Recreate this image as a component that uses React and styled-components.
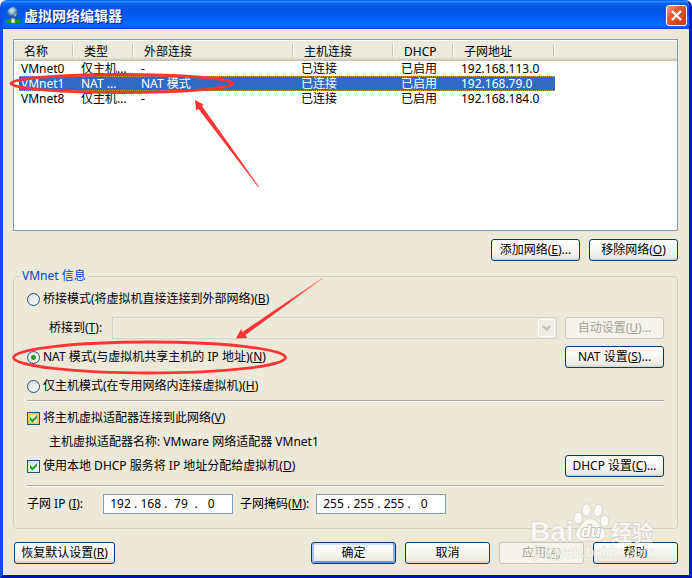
import React, { useState } from "react";
import styled, { createGlobalStyle } from "styled-components";

const GlobalStyle = createGlobalStyle`
  * {
    box-sizing: border-box;
  }

  body {
    margin: 0;
    background: #fff;
  }

  body, button, input, select {
    font-family: "Noto Sans", "Noto Sans CJK SC", sans-serif;
    font-size: 12px;
    line-height: 14px;
    color: #000;
  }
`;

const Window = styled.div`
  position: relative;
  display: flex;
  flex-direction: column;
  min-height: 100vh;
  background: #ece9d8;
  border: 3px solid #0a3fdc;
  border-color: #0a4fe8 #0019cf #0012b8 #0a4fe8;
  border-top: none;
  border-radius: 7px 7px 0 0;
  overflow: hidden;
`;

const TitleBar = styled.header`
  display: flex;
  align-items: center;
  gap: 4px;
  height: 29px;
  margin: 0 -3px;
  padding: 2px 5px 0 6px;
  background: linear-gradient(
    #0058e6 0%,
    #2a8cff 5%,
    #0a62ee 12%,
    #0054e3 30%,
    #0058ee 50%,
    #0268fe 80%,
    #0066fc 90%,
    #0046d2 100%
  );
`;

const Title = styled.h1`
  flex: 1;
  margin: 0;
  font-size: 14px;
  line-height: 20px;
  font-weight: 700;
  color: #fff;
  text-shadow: 1px 1px 1px #0a1883;
`;

const CloseButton = styled.button`
  display: flex;
  align-items: center;
  justify-content: center;
  width: 21px;
  height: 21px;
  padding: 0;
  border: 1px solid #fff;
  border-radius: 3px;
  background: linear-gradient(135deg, #f0a085 0%, #e35b35 35%, #c9340c 100%);
`;

const Content = styled.main`
  flex: 1;
  padding: 10px 11px 11px 10px;
`;

const ListBox = styled.div`
  height: 192px;
  border: 1px solid #7f9db9;
  background: #fff;
  overflow: hidden;
`;

const NetTable = styled.table`
  width: 100%;
  table-layout: fixed;
  border-collapse: separate;
  border-spacing: 0;
`;

const HeadCell = styled.th`
  height: 21px;
  padding: 3px 0 0 10px;
  font-weight: 400;
  text-align: left;
  background: linear-gradient(#fff 0, #fff 1px, #ebeadb 1px, #ebeadb 18px, #d6d2c2 19px, #c5c2b2 21px);

  &:not(:last-child) {
    background:
      linear-gradient(#c7c5b2, #c7c5b2) right 1px top 4px / 1px 13px no-repeat,
      linear-gradient(#fff, #fff) right 0 top 4px / 1px 13px no-repeat,
      linear-gradient(#fff 0, #fff 1px, #ebeadb 1px, #ebeadb 18px, #d6d2c2 19px, #c5c2b2 21px);
  }
`;

const Cell = styled.td`
  height: 15px;
  padding: 0 0 0 7px;
  white-space: nowrap;
  overflow: hidden;

  &:first-child {
    border-left: 5px solid #fff;
    padding-left: 2px;
  }
`;

const NetRow = styled.tr`
  color: ${(props) => (props.$selected ? "#fff" : "#000")};

  ${Cell}:not(:last-child) {
    ${(props) =>
      props.$selected &&
      `
      background:
        repeating-linear-gradient(90deg, #e0963c 0 1px, #316ac5 1px 2px) top / 100% 1px no-repeat,
        repeating-linear-gradient(90deg, #e0963c 0 1px, #316ac5 1px 2px) bottom / 100% 1px no-repeat,
        #316ac5;
    `}
  }
`;

const ListActions = styled.div`
  display: flex;
  justify-content: flex-end;
  gap: 9px;
  margin: 8px 0;
`;

const Button = styled.button`
  flex: none;
  width: ${(props) => props.$width || 85}px;
  height: 22px;
  padding: 0;
  border: 1px solid #003c74;
  border-radius: 3px;
  background: linear-gradient(#fff, #f4f4ef 60%, #ece9df 88%, #d8d0c4);
  white-space: nowrap;
  box-shadow: ${(props) =>
    props.$primary
      ? "inset 2px 0 #a9c3f0, inset -2px 0 #8aaae8, inset 0 2px #cee0fb, inset 0 -2px #6f91e0"
      : "none"};

  &:disabled {
    color: #a1a192;
    border-color: #c9c7ba;
    background: #f5f4ea;
  }
`;

const Group = styled.fieldset`
  min-width: 0;
  margin: 0;
  padding: 0 6px 12px;
  border: 1px solid #d0d0bf;
  border-radius: 4px;
`;

const Legend = styled.legend`
  padding: 0 2px;
  color: #0046d5;
`;

const GroupBody = styled.div`
  padding: 5px 7px 0;
`;

const Choices = styled.div`
  display: grid;
  grid-template-columns: 1fr 99px;
  gap: 7px 8px;
`;

const Adapter = styled.div`
  display: grid;
  row-gap: 2px;
  padding-bottom: 5px;
`;

const Row = styled.div`
  display: flex;
  align-items: center;
  justify-content: ${(props) => (props.$spread ? "space-between" : "flex-start")};
  gap: 8px;
  height: 22px;
  padding-left: ${(props) => (props.$indent ? 22 : 0)}px;
`;

const OptionLabel = styled.label`
  display: flex;
  align-items: center;
  gap: 3px;
  white-space: nowrap;
`;

const Radio = styled.input`
  appearance: none;
  width: 13px;
  height: 13px;
  margin: 0;
  border: 1px solid #21517f;
  border-radius: 50%;
  background: linear-gradient(135deg, #dcdcd7, #fff);

  &:checked {
    background:
      radial-gradient(circle, #21a121 0 2px, transparent 3px),
      linear-gradient(135deg, #dcdcd7, #fff);
  }
`;

const Check = styled.input`
  appearance: none;
  width: 13px;
  height: 13px;
  margin: 0;
  border: 1px solid #1c5180;
  box-shadow: ${(props) => (props.$hot ? "inset 0 0 0 2px #fbc761" : "none")};
  background: linear-gradient(135deg, #dcdcd7, #fff);
`;

const CheckBox = styled.span`
  position: relative;
  display: flex;

  svg {
    position: absolute;
    inset: 0;
    pointer-events: none;
  }
`;

const Combo = styled.div`
  position: relative;
  flex: 1;
  display: flex;

  svg {
    position: absolute;
    top: 2px;
    right: 2px;
    pointer-events: none;
  }
`;

const Select = styled.select`
  appearance: none;
  width: 100%;
  height: 22px;
  border: 1px solid #c9c7ba;
  border-radius: 0;
  background: #ece9d8;
  box-shadow: inset 0 0 0 1px #f5f4ea;
`;

const ComboLabel = styled.label`
  width: 55px;
  white-space: nowrap;
`;

const Divider = styled.hr`
  height: 2px;
  margin: 3px 0 5px;
  border: none;
  border-top: 1px solid #aca899;
  background: #fff;
`;

const SubnetRow = styled.div`
  display: flex;
  align-items: center;
  height: 24px;
`;

const SubnetLabel = styled.label`
  width: 76px;
  white-space: nowrap;
`;

const IpBox = styled.div`
  display: flex;
  align-items: center;
  width: 130px;
  height: 20px;
  margin-right: 7px;
  padding-left: 3px;
  border: 1px solid #7f9db9;
  background: #fff;
`;

const Octet = styled.input`
  width: 27px;
  padding: 0;
  border: none;
  outline: none;
  background: transparent;
  text-align: center;
`;

const Footer = styled.footer`
  display: flex;
  gap: 9px;
  margin-top: 13px;
  padding-left: 1px;
`;

const Spacer = styled.div`
  flex: 1;
`;

const Overlay = styled.svg`
  position: absolute;
  top: 0;
  left: -3px;
  pointer-events: none;
`;

const Watermark = styled.svg`
  position: absolute;
  right: 30px;
  bottom: 10px;
  pointer-events: none;
`;

const networks = [
  ["VMnet0", "仅主机...", "-", "已连接", "已启用", "192.168.113.0"],
  ["VMnet1", "NAT ...", "NAT 模式", "已连接", "已启用", "192.168.79.0"],
  ["VMnet8", "仅主机...", "-", "已连接", "已启用", "192.168.184.0"],
];

const columns = [
  ["名称", 60],
  ["类型", 60],
  ["外部连接", 160],
  ["主机连接", 100],
  ["DHCP", 60],
  ["子网地址", 101],
];

function AppIcon() {
  return (
    <svg width="14" height="17" viewBox="0 0 14 17">
      <defs>
        <radialGradient id="globe" cx="40%" cy="30%">
          <stop offset="0" stopColor="#e4f3fb" />
          <stop offset="0.5" stopColor="#86b4da" />
          <stop offset="1" stopColor="#2c5b94" />
        </radialGradient>
      </defs>
      <circle cx="7" cy="5.800" r="5.700" fill="url(#globe)" />
      <path d="M4 3l3-1 1 2-2 3-2-1zM8 7l3-1-1 3-2 1z" fill="#b9d8d2" opacity="0.6" />
      <path d="M6 11h2v3H6z" fill="#d9dfe0" />
      <path d="M0 13h14v3H0z" fill="#1d9a2b" />
      <path d="M5 12h4v4H5z" fill="#e8eeea" stroke="#526f6a" strokeWidth="0.6" />
    </svg>
  );
}

function Tick({ id, hot, checked, onChange }) {
  return (
    <CheckBox>
      <Check type="checkbox" id={id} $hot={hot} checked={checked} onChange={onChange} />
      {checked && (
        <svg width="13" height="13" viewBox="0 0 13 13">
          <path d="M3 5v3l2.500 2.500L10 6V3L5.500 7.500z" fill="#21a121" />
        </svg>
      )}
    </CheckBox>
  );
}

function IpField({ id, name, value }) {
  const [octets, setOctets] = useState(value);

  return (
    <IpBox role="group" aria-label={name}>
      {octets.map((octet, i) => (
        <React.Fragment key={i}>
          {i > 0 && <span>.</span>}
          <Octet
            id={`${id}-${i}`}
            type="text"
            maxLength={3}
            aria-label={i > 0 ? `${name} ${i + 1}` : undefined}
            value={octet}
            onChange={(e) => {
              setOctets(octets.map((o, n) => (n === i ? e.target.value : o)));
            }}
          />
        </React.Fragment>
      ))}
    </IpBox>
  );
}

function Marks() {
  return (
    <Overlay width="340" height="400" viewBox="0 0 340 400" fill="none">
      <defs>
        <linearGradient id="tailA" gradientUnits="userSpaceOnUse" x1="195" y1="100" x2="259" y2="187">
          <stop offset="0.7" stopColor="#ff3535" />
          <stop offset="1" stopColor="#ff3535" stopOpacity="0.8" />
        </linearGradient>
        <linearGradient id="tailB" gradientUnits="userSpaceOnUse" x1="236" y1="338" x2="322" y2="278">
          <stop offset="0.6" stopColor="#ff3535" />
          <stop offset="1" stopColor="#ff3535" stopOpacity="0.4" />
        </linearGradient>
      </defs>
      <ellipse cx="122" cy="83.500" rx="111" ry="9" stroke="#ff3535" strokeWidth="2.800" />
      <ellipse cx="149.500" cy="357.500" rx="136" ry="15.500" stroke="#ff3535" strokeWidth="2.800" />
      <path d="M195 100l8.500 4.500-1.500 1.500L259 186.500l-.8.700L198.500 109l-2.500 1.500z" fill="url(#tailA)" />
      <path d="M236 338.500l5-9.500 1.500 3L322 278l.5.700L245.500 335l1.500 3z" fill="url(#tailB)" />
    </Overlay>
  );
}

function BaiduMark() {
  return (
    <Watermark width="130" height="63" viewBox="0 0 130 63">
      <g
        fill="#fff"
        fillOpacity="0.75"
        stroke="#c9c7ba"
        strokeOpacity="0.6"
        strokeWidth="1.500"
        paintOrder="stroke"
        fontFamily='"Liberation Sans", "Noto Sans CJK SC", sans-serif'
        fontWeight="700"
      >
        <text x="1" y="39" fontSize="28">Bai</text>
        <text x="82" y="38" fontSize="21">经验</text>
        <ellipse cx="49" cy="16" rx="4" ry="5.500" />
        <ellipse cx="57.500" cy="8" rx="4" ry="6" />
        <ellipse cx="69" cy="8.500" rx="4" ry="6" transform="rotate(12 69 8.500)" />
        <ellipse cx="75.500" cy="19" rx="4" ry="5.500" />
        <path d="M61.500 17c6 0 8 5 11 8 6 5 4 14-4 14-3 0-4-1-7-1s-4 1-7 1c-8 0-10-9-4-14 3-3 5-8 11-8z" />
      </g>
      <text
        x="52"
        y="35"
        fontSize="16"
        fill="#fff"
        stroke="#c3c0b0"
        strokeWidth="2"
        paintOrder="stroke"
        fontFamily='"Liberation Sans", sans-serif'
        fontWeight="700"
        fontStyle="italic"
      >
        du
      </text>
      <text
        x="5"
        y="55"
        fontSize="15"
        fill="#fff"
        fillOpacity="0.75"
        stroke="#c9c7ba"
        strokeOpacity="0.4"
        strokeWidth="1.500"
        paintOrder="stroke"
        fontFamily='"Liberation Sans", sans-serif'
      >
        jingyan.baidu.com
      </text>
    </Watermark>
  );
}

export default function App() {
  const [selected, setSelected] = useState("VMnet1");
  const [mode, setMode] = useState("nat");
  const [connectHost, setConnectHost] = useState(true);
  const [useDhcp, setUseDhcp] = useState(true);

  return (
    <Window>
      <GlobalStyle />
      <TitleBar>
        <AppIcon />
        <Title>虚拟网络编辑器</Title>
        <CloseButton type="button" aria-label="关闭">
          <svg width="13" height="13" viewBox="0 0 13 13">
            <path d="M2 2l9 9M11 2l-9 9" stroke="#fff" strokeWidth="2.200" />
          </svg>
        </CloseButton>
      </TitleBar>
      <Content>
        <ListBox>
          <NetTable>
            <colgroup>
              {columns.map(([name, width]) => (
                <col key={name} width={width} />
              ))}
              <col />
            </colgroup>
            <thead>
              <tr>
                {columns.map(([name]) => (
                  <HeadCell key={name}>{name}</HeadCell>
                ))}
                <HeadCell />
              </tr>
            </thead>
            <tbody>
              {networks.map((net) => (
                <NetRow
                  key={net[0]}
                  $selected={net[0] === selected}
                  onClick={() => setSelected(net[0])}
                >
                  {net.map((value, i) => (
                    <Cell key={i}>{value}</Cell>
                  ))}
                  <Cell />
                </NetRow>
              ))}
            </tbody>
          </NetTable>
        </ListBox>
        <ListActions>
          <Button type="button" $width={89}>
            添加网络(<u>E</u>)...
          </Button>
          <Button type="button" $width={89}>
            移除网络(<u>O</u>)
          </Button>
        </ListActions>
        <Group>
          <Legend>VMnet 信息</Legend>
          <GroupBody>
            <Choices>
              <Row>
                <OptionLabel>
                  <Radio
                    type="radio"
                    name="mode"
                    checked={mode === "bridge"}
                    onChange={() => setMode("bridge")}
                  />
                  <span>
                    桥接模式(将虚拟机直接连接到外部网络)(<u>B</u>)
                  </span>
                </OptionLabel>
              </Row>
              <span />
              <Row $indent>
                <ComboLabel htmlFor="bridge-to">
                  桥接到(<u>T</u>):
                </ComboLabel>
                <Combo>
                  <Select id="bridge-to" disabled={mode !== "bridge"} />
                  <svg width="17" height="18" viewBox="0 0 17 18">
                    <rect x="0.500" y="0.500" width="16" height="17" rx="1" fill="#eeede3" stroke="#fff" />
                    <path d="M5 7l3.500 3.500L12 7" fill="none" stroke="#c2c1b4" strokeWidth="2.400" />
                  </svg>
                </Combo>
              </Row>
              <Button type="button" $width={99} disabled={mode !== "bridge"}>
                自动设置(<u>U</u>)...
              </Button>
              <Row>
                <OptionLabel>
                  <Radio
                    type="radio"
                    name="mode"
                    checked={mode === "nat"}
                    onChange={() => setMode("nat")}
                  />
                  <span>
                    NAT 模式(与虚拟机共享主机的 IP 地址)(<u>N</u>)
                  </span>
                </OptionLabel>
              </Row>
              <Button type="button" $width={99} disabled={mode !== "nat"}>
                NAT 设置(<u>S</u>)...
              </Button>
              <Row>
                <OptionLabel>
                  <Radio
                    type="radio"
                    name="mode"
                    checked={mode === "host"}
                    onChange={() => setMode("host")}
                  />
                  <span>
                    仅主机模式(在专用网络内连接虚拟机)(<u>H</u>)
                  </span>
                </OptionLabel>
              </Row>
            </Choices>
            <Divider />
            <Adapter>
              <Row>
                <OptionLabel htmlFor="connect-host">
                  <Tick
                    id="connect-host"
                    hot
                    checked={connectHost}
                    onChange={(e) => setConnectHost(e.target.checked)}
                  />
                  <span>
                    将主机虚拟适配器连接到此网络(<u>V</u>)
                  </span>
                </OptionLabel>
              </Row>
              <Row $indent>主机虚拟适配器名称: VMware 网络适配器 VMnet1</Row>
              <Row $spread>
                <OptionLabel htmlFor="use-dhcp">
                  <Tick
                    id="use-dhcp"
                    checked={useDhcp}
                    onChange={(e) => setUseDhcp(e.target.checked)}
                  />
                  <span>
                    使用本地 DHCP 服务将 IP 地址分配给虚拟机(<u>D</u>)
                  </span>
                </OptionLabel>
                <Button type="button" $width={99}>
                  DHCP 设置(<u>C</u>)...
                </Button>
              </Row>
            </Adapter>
            <Divider />
            <SubnetRow>
              <SubnetLabel htmlFor="ip-0">
                子网 IP (<u>I</u>):
              </SubnetLabel>
              <IpField id="ip" name="子网 IP" value={["192", "168", "79", "0"]} />
              <SubnetLabel htmlFor="mask-0">
                子网掩码(<u>M</u>):
              </SubnetLabel>
              <IpField id="mask" name="子网掩码" value={["255", "255", "255", "0"]} />
            </SubnetRow>
          </GroupBody>
        </Group>
        <Footer>
          <Button type="button" $width={101}>
            恢复默认设置(<u>R</u>)
          </Button>
          <Spacer />
          <Button type="button" $primary>
            确定
          </Button>
          <Button type="button">取消</Button>
          <Button type="button" disabled>
            应用(<u>A</u>)
          </Button>
          <Button type="button">帮助</Button>
        </Footer>
      </Content>
      <Marks />
      <BaiduMark />
    </Window>
  );
}
